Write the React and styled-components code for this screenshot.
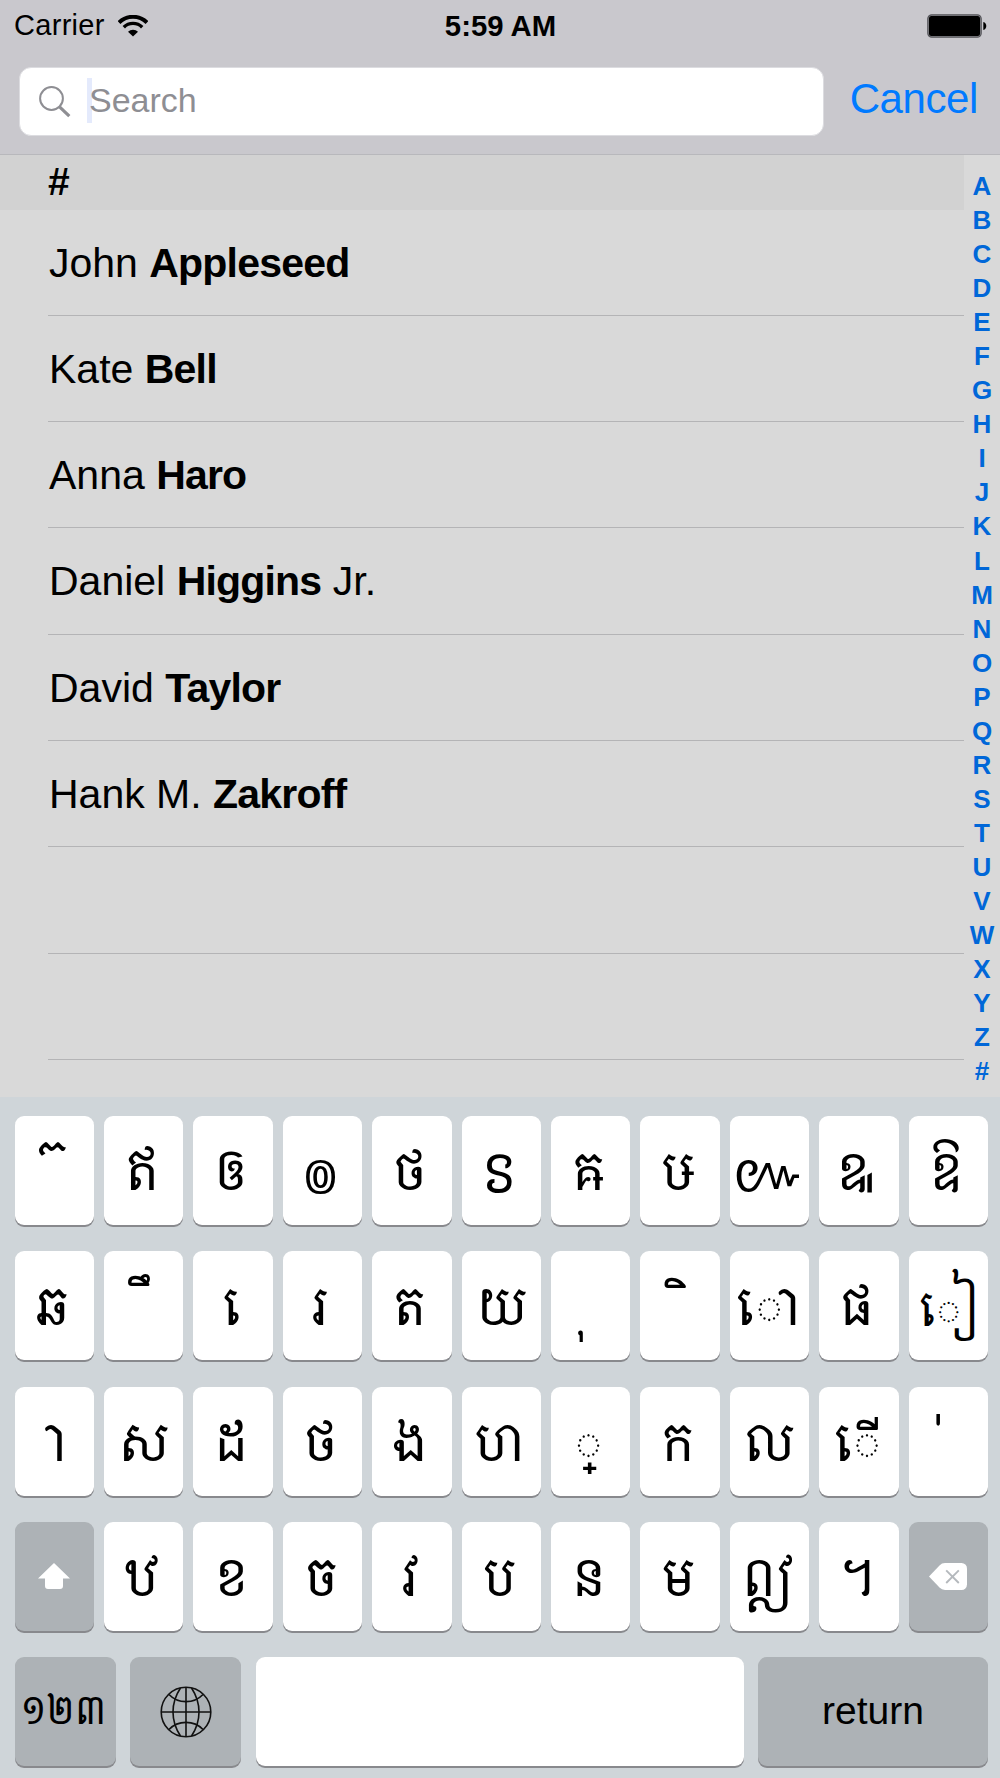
import styled, { createGlobalStyle } from "styled-components";

const GlobalStyle = createGlobalStyle`
  * {
    box-sizing: border-box;
  }

  body {
    margin: 0;
    font-family: "Liberation Sans", Arial, sans-serif;
    color: #000;
  }
`;

const Screen = styled.div`
  display: flex;
  flex-direction: column;
  width: 1000px;
  height: 1778px;
  overflow: hidden;
  background: #d9d9d9;
`;

const Header = styled.header`
  flex: none;
  height: 155px;
  background: #c9c8cd;
  border-bottom: 1px solid #b8b8bc;
`;

const StatusBar = styled.div`
  display: grid;
  grid-template-columns: 1fr auto 1fr;
  align-items: center;
  height: 51px;
  padding: 0 13px 0 14px;
`;

const Carrier = styled.div`
  display: flex;
  align-items: center;
  gap: 13px;
  font-size: 29px;
  letter-spacing: 0.3px;
`;

const Clock = styled.div`
  font-size: 29.3px;
  font-weight: bold;
`;

const BatteryIcon = styled.svg`
  justify-self: end;
`;

const SearchRow = styled.div`
  display: flex;
  align-items: center;
  padding: 16px 22px 0 19px;
`;

const SearchField = styled.label`
  display: flex;
  align-items: center;
  flex: none;
  width: 805px;
  height: 69px;
  padding-left: 19px;
  border: 1px solid #dcdce0;
  border-radius: 12px;
  background: #fff;
`;

const Caret = styled.span`
  width: 5px;
  height: 45px;
  margin: -3px -3px 0 16px;
  background: #e4eafc;
`;

const Placeholder = styled.span`
  padding-bottom: 2px;
  font-size: 34px;
  color: #8e8e93;
`;

const CancelButton = styled.button`
  margin-left: auto;
  padding: 0 0 6px;
  border: none;
  background: none;
  font-family: inherit;
  font-size: 42px;
  letter-spacing: -0.4px;
  color: #007aff;
`;

const Main = styled.main`
  display: flex;
  flex: none;
  height: 942px;
  overflow: hidden;
`;

const List = styled.div`
  flex: none;
  width: 964px;
`;

const SectionTitle = styled.div`
  height: 54.6px;
  padding-left: 48px;
  background: #d2d2d2;
  font-size: 39px;
  font-weight: bold;
  line-height: 53px;
`;

const Row = styled.div`
  height: 106.3px;
  margin-left: 48px;
  padding-left: 1px;
  border-bottom: 1px solid #b4b4b6;
  font-size: 41px;
  line-height: 106px;
  white-space: pre;
`;

const LastName = styled.b`
  letter-spacing: -0.8px;
`;

const IndexBar = styled.div`
  display: flex;
  flex: 1;
  flex-direction: column;
  align-items: center;
  padding-top: 14px;
`;

const IndexLetter = styled.span`
  height: 34.05px;
  font-size: 26px;
  font-weight: bold;
  line-height: 34px;
  color: #0067d8;
`;

const Keyboard = styled.div`
  display: flex;
  flex: 1;
  flex-direction: column;
  gap: 26.3px;
  padding: 19px 12.2px 0 14.6px;
  background: #cfd5d9;
`;

const KeyRow = styled.div`
  display: flex;
  gap: ${(props) => (props.$wide ? "14.4px" : "10px")};
`;

const Key = styled.button`
  display: flex;
  flex: ${(props) => (props.$width ? `0 0 ${props.$width}px` : "1 1 0")};
  align-items: center;
  justify-content: center;
  min-width: 0;
  height: 109px;
  padding: 0;
  border: none;
  border-radius: 9px;
  background: ${(props) => (props.$dark ? "#adb2b6" : "#fff")};
  box-shadow: 0 2px 0 #88898d;
  font-family: "Liberation Sans", sans-serif;
  font-size: ${(props) => props.$size || 49}px;
  color: #000;
`;

// Khmer letters are set a little taller than the font draws them
const Glyph = styled.span`
  font-family: ${(props) =>
    props.$sans ? '"Noto Sans Khmer", sans-serif' : '"Noto Serif Khmer", serif'};
  font-size: ${(props) => props.$size || "inherit"};
  font-weight: ${(props) => props.$weight || 400};
  line-height: 1;
  white-space: pre;
  transform: translate(${(props) => props.$x ?? -2}px, ${(props) => props.$y || 0}px)
    scaleY(1.08);
`;

const ReturnLabel = styled.span`
  padding-bottom: 2px;
`;

const contacts = [
  ["John ", "Appleseed", ""],
  ["Kate ", "Bell", ""],
  ["Anna ", "Haro", ""],
  ["Daniel ", "Higgins", " Jr."],
  ["David ", "Taylor", ""],
  ["Hank M. ", "Zakroff", ""],
  ["", "", ""],
  ["", "", ""],
];

const indexLetters = "ABCDEFGHIJKLMNOPQRSTUVWXYZ#".split("");

// a no-break space carries the vowel signs that have no dotted circle
const keyRows = [
  [
    { char: "\u00a0៊", x: 9, y: 9 },
    "ឥ",
    "ឲ",
    { char: "៙", sans: true, size: "54px" },
    "ថ",
    { char: "ៜ", sans: true, size: "52px" },
    "ឝ",
    "ឞ",
    { char: "៚", sans: true, size: "51px" },
    "ឩ",
    "ឱ",
  ],
  [
    "ឆ",
    { char: "\u00a0ឹ", x: 6, y: 6 },
    { char: "\u00a0េ", x: 5 },
    { char: "រ", x: -4 },
    "ត",
    { char: "យ", x: 0 },
    { char: "\u00a0ុ", x: -7, y: 3 },
    { char: "\u00a0ិ", x: 6, y: 8 },
    { char: "ោ", x: -1 },
    "ផ",
    { char: "ៀ", x: 1, y: 2, size: "44px" },
  ],
  [
    "\u00a0ា",
    { char: "ស", x: 0 },
    "ដ",
    "ថ",
    "ង",
    "ហ",
    "្",
    "ក",
    { char: "ល", x: 0 },
    { char: "ើ", x: 0 },
    { char: "\u00a0់", x: 1, y: 7 },
  ],
];

const lastLetters = ["ឋ", "ខ", "ច", "វ", "ប", "ន", "ម", "ឦ", "។"];

const WifiIcon = () => (
  <svg width="30" height="22" viewBox="0 0 30 22" fill="none" stroke="#000">
    <path d="M1 7.5a20 20 0 0 1 28 0" strokeWidth="4" />
    <path d="M5.8 12.2a13 13 0 0 1 18.4 0" strokeWidth="3.4" />
    <path d="M10 16.8a7 7 0 0 1 10 0L15 21.6z" fill="#000" stroke="none" />
  </svg>
);

const Battery = () => (
  <BatteryIcon width="60" height="24" viewBox="0 0 60 24">
    <rect x="0.8" y="0.8" width="53.4" height="22.4" rx="4" fill="#8a8a8e" stroke="#55555a" strokeWidth="1.2" />
    <rect x="2" y="2" width="51" height="20" rx="2.5" />
    <path d="M56.3 8c4 1 4 7 0 8z" />
  </BatteryIcon>
);

const SearchIcon = () => (
  <svg width="32" height="32" viewBox="0 0 32 32" fill="none" stroke="#8e8e93">
    <circle cx="12.5" cy="12.5" r="11.4" strokeWidth="2" />
    <path d="M20.3 20.6l10 9.6" strokeWidth="3.2" />
  </svg>
);

const ShiftIcon = () => (
  <svg width="32" height="26" viewBox="0 0 32 26" fill="#fff">
    <path d="M16 0L32 15.5H25V23a3 3 0 0 1-3 3H10a3 3 0 0 1-3-3V15.5H0z" />
  </svg>
);

const DeleteIcon = () => (
  <svg width="38" height="27" viewBox="0 0 38 27">
    <path
      d="M0 13.5L10.5 2.4Q12.8 0 16 0H32.5a5.5 5.5 0 0 1 5.5 5.5V21.5a5.5 5.5 0 0 1-5.5 5.5H16q-3.2 0-5.5-2.4z"
      fill="#fff"
    />
    <path d="M17.2 7.4l12.6 12.6M29.8 7.4L17.2 20" stroke="#b5b9bd" strokeWidth="1.9" />
  </svg>
);

const GlobeIcon = () => (
  <svg width="52" height="52" viewBox="0 0 52 52" fill="none" stroke="#111" strokeWidth="1.6">
    <circle cx="26" cy="26" r="24.8" />
    <path d="M26 1v50M1 26h50" />
    <path d="M20.5 2C10.5 17 10.5 35 20.5 50M31.5 2c10 15 10 33 0 48" />
    <path d="M9 8.5c9 9.5 25 9.5 34 0M9 43.5c9-9.5 25-9.5 34 0" />
  </svg>
);

const LetterKey = ({ letter }) => {
  const { char, x, y, sans, size } =
    typeof letter === "string" ? { char: letter } : letter;
  return (
    <Key>
      <Glyph $x={x} $y={y} $sans={sans} $size={size}>
        {char}
      </Glyph>
    </Key>
  );
};

const App = () => {
  return (
    <>
      <GlobalStyle />
      <Screen>
        <Header>
          <StatusBar>
            <Carrier>
              Carrier
              <WifiIcon />
            </Carrier>
            <Clock>5:59 AM</Clock>
            <Battery />
          </StatusBar>
          <SearchRow>
            <SearchField>
              <SearchIcon />
              <Caret />
              <Placeholder>Search</Placeholder>
            </SearchField>
            <CancelButton>Cancel</CancelButton>
          </SearchRow>
        </Header>
        <Main>
          <List>
            <SectionTitle>#</SectionTitle>
            {contacts.map(([first, last, suffix], i) => (
              <Row key={i}>
                {first}
                <LastName>{last}</LastName>
                {suffix}
              </Row>
            ))}
          </List>
          <IndexBar>
            {indexLetters.map((letter) => (
              <IndexLetter key={letter}>{letter}</IndexLetter>
            ))}
          </IndexBar>
        </Main>
        <Keyboard>
          {keyRows.map((row, i) => (
            <KeyRow key={i}>
              {row.map((letter, j) => (
                <LetterKey key={j} letter={letter} />
              ))}
            </KeyRow>
          ))}
          <KeyRow>
            <Key $dark>
              <ShiftIcon />
            </Key>
            {lastLetters.map((letter) => (
              <LetterKey key={letter} letter={letter} />
            ))}
            <Key $dark>
              <DeleteIcon />
            </Key>
          </KeyRow>
          <KeyRow $wide>
            <Key $dark $width={101.2} $size={36.5}>
              <Glyph $weight={370} $x={-1} $y={-2}>
                ១២៣
              </Glyph>
            </Key>
            <Key $dark $width={111}>
              <GlobeIcon />
            </Key>
            <Key aria-label="space" />
            <Key $dark $width={229.5} $size={39}>
              <ReturnLabel>return</ReturnLabel>
            </Key>
          </KeyRow>
        </Keyboard>
      </Screen>
    </>
  );
};

export default App;
